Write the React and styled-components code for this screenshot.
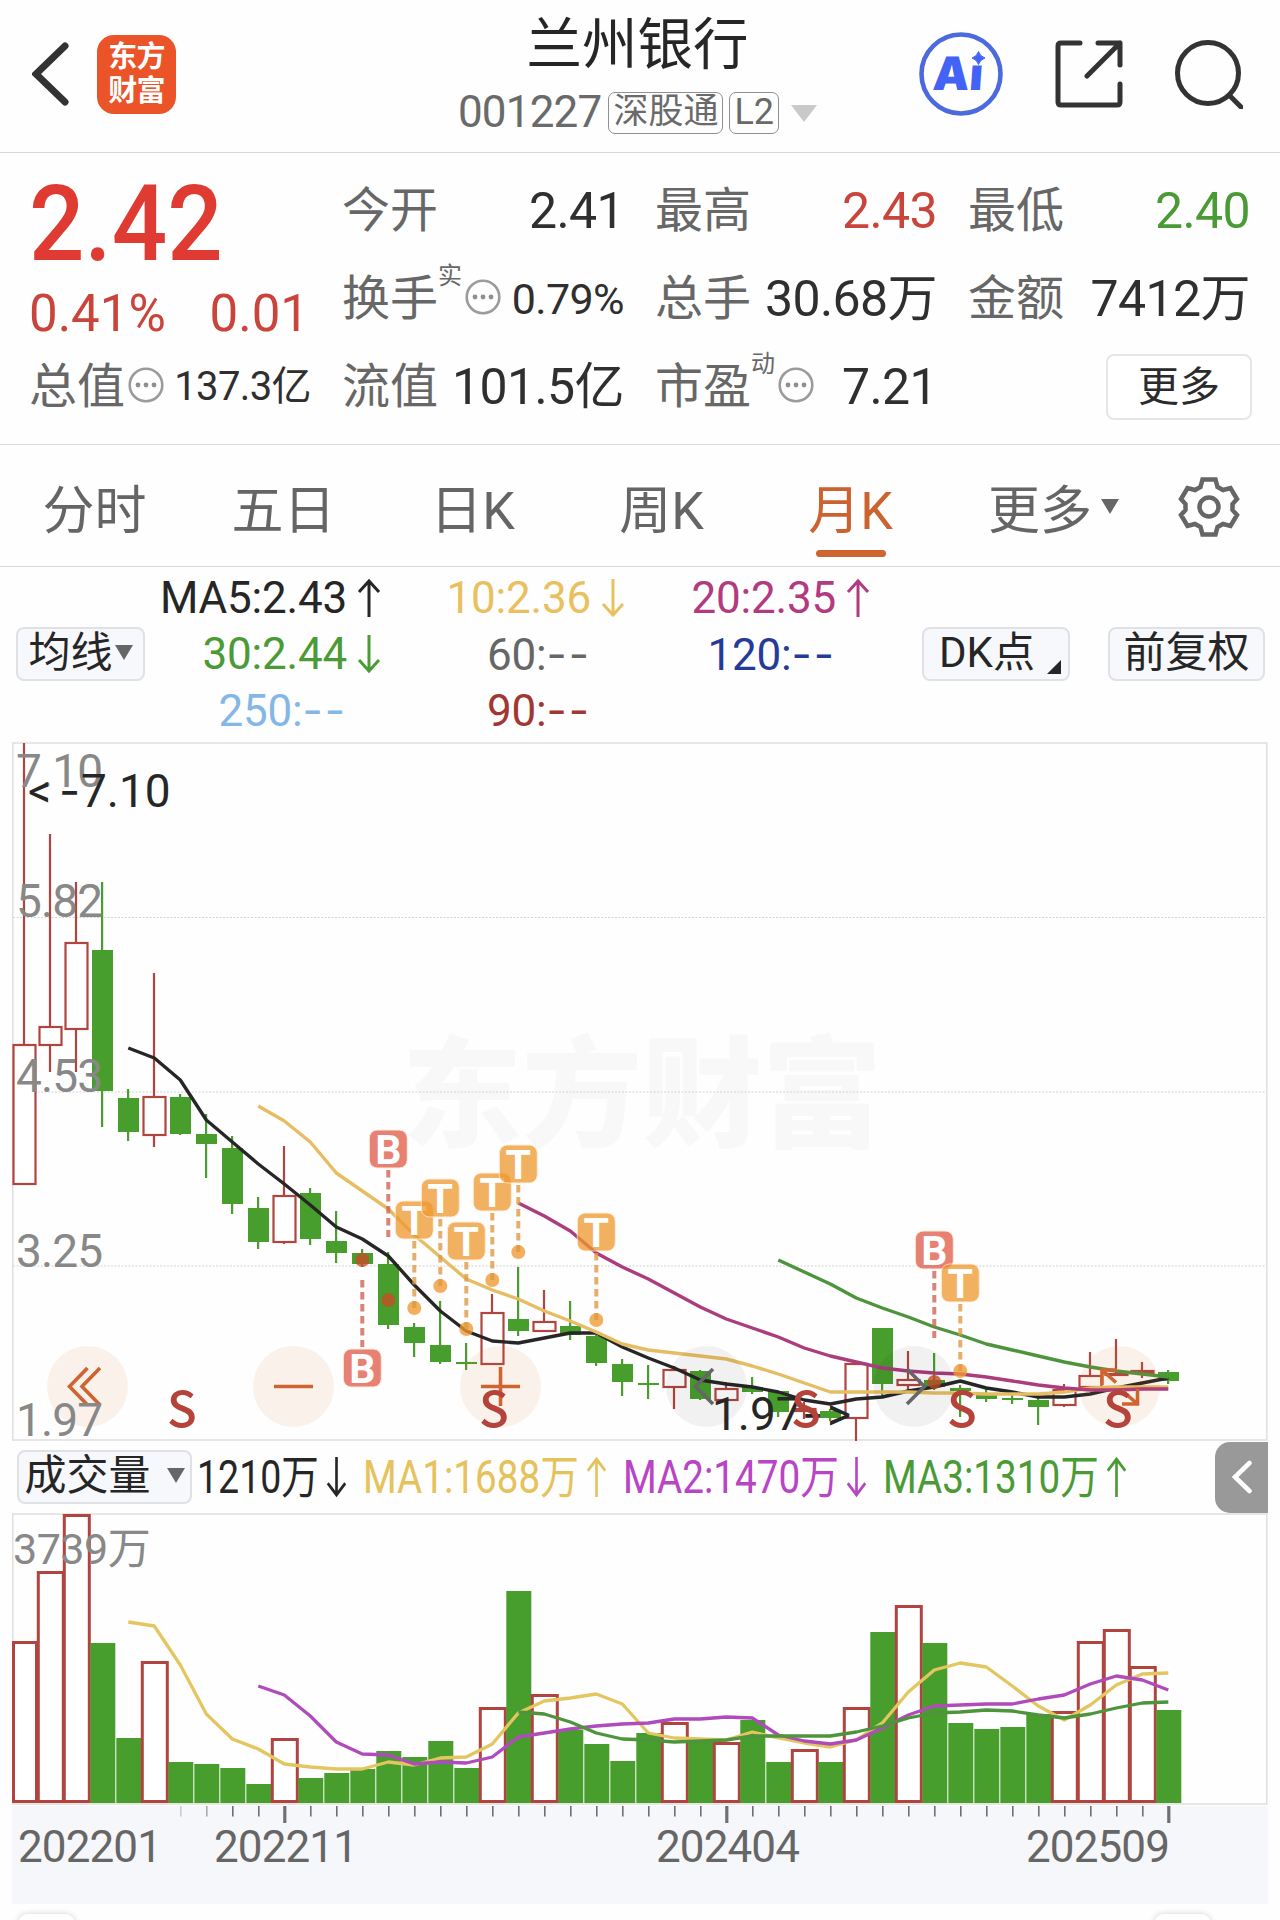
import React from "react";
import styled, { createGlobalStyle } from "styled-components";

const GlobalStyle = createGlobalStyle`
  * {
    box-sizing: border-box;
  }

  body {
    margin: 0;
    background: #ffffff;
    font-family: Roboto, "Noto Sans CJK SC", sans-serif;
  }
`;

const RED = "#c9453b";
const GREEN = "#4a9a36";
const CANDLE_RED = "#b0453f";
const CANDLE_GREEN = "#489e2d";
const ORANGE = "#cf6430";

const Page = styled.div`
  width: 1280px;
  height: 1920px;
  overflow: hidden;
  display: flex;
  flex-flow: column;
  background: #fefefe;
  color: #2b2b2b;

  > * {
    flex: none;
  }
`;

/* header */

const Header = styled.header`
  height: 153px;
  padding: 0 37px 4px 32px;
  border-bottom: 1px solid #d8d8d8;
  display: grid;
  grid-template-columns: 1fr auto 1fr;
  align-items: center;
`;

const HeaderLeft = styled.div`
  display: flex;
  align-items: center;
  gap: 28px;
`;

const AppLogo = styled.div`
  width: 79px;
  height: 79px;
  border-radius: 17px;
  background: #ea5428;
  color: #ffffff;
  display: flex;
  flex-flow: column;
  align-items: center;
  justify-content: center;
  font-size: 29px;
  font-weight: 700;
  line-height: 34px;
  letter-spacing: -0.8px;
`;

const HeaderCenter = styled.div`
  display: flex;
  flex-flow: column;
  align-items: center;
  gap: 14px;
`;

const StockName = styled.h1`
  margin: 0;
  font-size: 55.5px;
  font-weight: 400;
  line-height: 64px;
  color: #262626;
`;

const StockMeta = styled.div`
  display: flex;
  align-items: center;
  height: 42px;
  color: #6a6a6a;
`;

const StockCode = styled.span`
  font-size: 44px;
  line-height: 40px;
  letter-spacing: -0.8px;
  margin: -3px 7px 0 0;
`;

const MetaTag = styled.span`
  height: 42px;
  padding: 0 4px;
  margin-right: 6px;
  border: 1.5px solid #909090;
  border-radius: 7px;
  font-size: ${(props) => props.$size || 35}px;
  line-height: 38px;
`;

const Triangle = styled.span`
  border: solid transparent;
  border-width: ${(props) => props.$h}px ${(props) => props.$w / 2}px 0;
  border-top-color: ${(props) => props.$color || "#666666"};
  margin-left: ${(props) => props.$gap || 0}px;
`;

const HeaderRight = styled.div`
  display: flex;
  align-items: center;
  justify-content: flex-end;
  gap: 52px;
`;

/* quote */

const Quote = styled.section`
  height: 292px;
  padding: 14px 29px 0;
  border-bottom: 1px solid #d8d8d8;
  display: grid;
  grid-template-columns: repeat(4, 282px);
  grid-template-rows: repeat(3, 88px);
  column-gap: 31px;
`;

const PriceBlock = styled.div`
  grid-row: span 2;
`;

const Price = styled.div`
  font-size: 105px;
  font-weight: 500;
  line-height: 115px;
  color: #df3b32;
  transform: scaleX(0.93);
  transform-origin: left center;
`;

const Change = styled.div`
  display: flex;
  justify-content: space-between;
  padding-right: 2px;
  font-size: 51px;
  line-height: 63px;
  color: ${RED};
`;

const Cell = styled.div`
  display: flex;
  align-items: center;
`;

const CellLabel = styled.span`
  font-size: 48px;
  line-height: 60px;
  color: #676767;
`;

const CellSup = styled.sup`
  align-self: flex-start;
  margin-top: 9px;
  font-size: 24px;
  line-height: 24px;
  color: #676767;
`;

const CellValue = styled.span`
  margin-left: auto;
  font-size: ${(props) => props.$size || 50}px;
  line-height: 60px;
  letter-spacing: -0.6px;
  white-space: nowrap;
  color: ${(props) => props.$color || "#2f2f2f"};
`;

const MoreButton = styled.button`
  width: 146px;
  height: 66px;
  margin: 0 -2px 0 auto;
  padding: 0;
  border: 2px solid #e6e6e6;
  border-radius: 8px;
  background: #ffffff;
  font-family: inherit;
  font-size: 41px;
  line-height: 58px;
  color: #2b2b2b;
`;

/* period tabs */

const Tabs = styled.nav`
  height: 122px;
  border-bottom: 1px solid #d8d8d8;
  display: grid;
  grid-template-columns: repeat(5, 189px) 217px 93px;
`;

const Tab = styled.div`
  display: flex;
  align-items: center;
  justify-content: center;
  padding-top: 2px;
  font-size: 52px;
  color: ${(props) => (props.$active ? "#cb622f" : "#656565")};
  position: relative;

  &::after {
    content: "";
    display: ${(props) => (props.$active ? "block" : "none")};
    position: absolute;
    bottom: 9px;
    width: 70px;
    height: 7px;
    border-radius: 4px;
    background: ${ORANGE};
  }
`;

/* moving average legend */

const Averages = styled.section`
  height: 175px;
  padding: 3px 0 4px 16px;
  display: flex;
  align-items: center;
`;

const Pill = styled.button`
  width: ${(props) => props.$width}px;
  height: 54px;
  flex: none;
  padding: 0 0 3px;
  border: 2px solid #dfe1e5;
  border-radius: 8px;
  background: #f7f8fb;
  display: flex;
  align-items: center;
  justify-content: center;
  font-family: inherit;
  font-size: 42px;
  line-height: 48px;
  color: #262626;
`;

const Corner = styled.span`
  align-self: flex-end;
  margin: 0 -8px 2px 12px;
  border-style: solid;
  border-width: 0 0 14px 14px;
  border-color: transparent transparent #262626;
`;

const Legend = styled.div`
  display: grid;
  grid-template-columns: 236px 244px 245px;
  grid-auto-rows: 56px;
`;

const LegendItem = styled.div`
  display: flex;
  align-items: center;
  justify-content: flex-end;
  gap: 10px;
  font-size: 44px;
  letter-spacing: -0.2px;
  color: ${(props) => props.$color};
`;

const Dashes = styled.span`
  font-family: Inter, sans-serif;
  letter-spacing: 2px;
`;

const ArrowSlot = styled.span`
  width: 24px;
  height: 40px;
  display: flex;
`;

const PillGroup = styled.div`
  display: flex;
  gap: 38px;
  margin-left: 52px;
`;

/* charts */

const Chart = styled.svg`
  display: block;
  margin-left: 12px;
`;

const AxisText = styled.text`
  font-size: ${(props) => props.$size || 46}px;
  letter-spacing: ${(props) => props.$spacing ?? -0.9}px;
  fill: ${(props) => props.$fill || "#888888"};
`;

const SignalText = styled.text`
  font-size: 41px;
  font-weight: 700;
  text-anchor: middle;
  fill: #ffffff;
`;

const SellText = styled.text`
  font-family: "Noto Sans CJK SC", sans-serif;
  font-size: 49px;
  font-weight: 500;
  text-anchor: middle;
  fill: #b5433a;
`;

const Watermark = styled.text`
  font-family: "Noto Sans CJK SC", sans-serif;
  font-size: 120px;
  font-weight: 900;
  text-anchor: middle;
  fill: #f8f8f8;
`;

const VolumeBar = styled.section`
  height: 72px;
  padding-left: 17px;
  display: flex;
  align-items: center;
`;

const VolumeItem = styled.div`
  display: flex;
  align-items: center;
  gap: 10px;
  margin-left: ${(props) => props.$gap}px;
  color: ${(props) => props.$color};
`;

const NarrowText = styled.span`
  width: ${(props) => props.$width}px;
  font-size: 46px;
  line-height: 60px;
  white-space: nowrap;
  transform: scaleX(${(props) => props.$scale || 0.84});
  transform-origin: left center;
`;

const CollapseHandle = styled.div`
  width: 53px;
  height: 71px;
  margin: 0 12px 0 auto;
  border-radius: 15px 0 0 15px;
  background: #999999;
  display: flex;
  align-items: center;
  justify-content: center;
`;

const Footer = styled.footer`
  height: 16px;
  margin-top: 10px;
  padding: 0 69px 0 18px;
  display: flex;
  justify-content: space-between;
`;

const FooterTab = styled.div`
  width: 57px;
  height: 40px;
  border-radius: 10px;
  background: #ffffff;
  box-shadow: 0 0 6px rgba(0, 0, 0, 0.18);
`;

// [up, high, bodyTop, bodyBottom, low], one entry per month
const candles = [
  [1, 743, 1045, 1184, 1184],
  [1, 834, 1027, 1045, 1072],
  [1, 882, 943, 1029, 1072],
  [0, 882, 950, 1091, 1127],
  [0, 1089, 1098, 1132, 1141],
  [1, 973, 1097, 1135, 1147],
  [0, 1094, 1097, 1134, 1135],
  [0, 1114, 1134, 1144, 1178],
  [0, 1136, 1148, 1204, 1214],
  [0, 1197, 1208, 1242, 1249],
  [1, 1146, 1196, 1242, 1244],
  [0, 1188, 1193, 1239, 1245],
  [0, 1211, 1241, 1253, 1263],
  [0, 1249, 1253, 1264, 1267],
  [0, 1252, 1264, 1325, 1329],
  [0, 1323, 1327, 1343, 1357],
  [0, 1301, 1345, 1362, 1364],
  [0, 1343, 1362, 1364, 1370],
  [1, 1294, 1313, 1364, 1364],
  [0, 1267, 1319, 1331, 1336],
  [1, 1290, 1322, 1331, 1331],
  [0, 1301, 1326, 1335, 1340],
  [0, 1335, 1336, 1363, 1366],
  [0, 1359, 1364, 1382, 1396],
  [0, 1365, 1383, 1385, 1399],
  [1, 1366, 1370, 1387, 1409],
  [0, 1370, 1371, 1399, 1400],
  [1, 1382, 1389, 1400, 1400],
  [0, 1377, 1387, 1392, 1394],
  [0, 1391, 1391, 1412, 1417],
  [1, 1402, 1409, 1411, 1419],
  [0, 1409, 1411, 1418, 1421],
  [1, 1363, 1364, 1418, 1441],
  [0, 1328, 1328, 1384, 1397],
  [1, 1351, 1380, 1385, 1390],
  [0, 1353, 1380, 1387, 1390],
  [0, 1385, 1388, 1391, 1417],
  [0, 1389, 1395, 1399, 1402],
  [0, 1395, 1398, 1400, 1404],
  [0, 1393, 1400, 1407, 1425],
  [1, 1384, 1390, 1405, 1407],
  [1, 1352, 1376, 1387, 1387],
  [1, 1339, 1374, 1375, 1376],
  [1, 1362, 1371, 1373, 1378],
  [0, 1370, 1372, 1381, 1384],
];

// [up, top]
const volumes = [
  [1, 1641], [1, 1571], [1, 1514], [0, 1643], [0, 1738], [1, 1661],
  [0, 1762], [0, 1764], [0, 1768], [0, 1784], [1, 1738], [0, 1778],
  [0, 1773], [0, 1769], [0, 1751], [0, 1757], [0, 1741], [0, 1768],
  [1, 1707], [0, 1591], [1, 1694], [0, 1730], [0, 1744], [0, 1761],
  [0, 1733], [1, 1722], [0, 1740], [1, 1742], [0, 1720], [0, 1762],
  [1, 1749], [0, 1762], [1, 1707], [0, 1632], [1, 1605], [0, 1643],
  [0, 1723], [0, 1729], [0, 1727], [0, 1714], [1, 1711], [1, 1641],
  [1, 1629], [1, 1666], [0, 1710],
];

const priceLines = [
  {
    color: "#262626",
    start: 4,
    ys: [1048, 1058, 1080, 1120, 1142, 1164, 1184, 1205, 1227, 1239, 1256, 1285, 1311, 1331, 1341, 1343, 1338, 1333, 1333, 1347, 1358, 1368, 1380, 1384, 1387, 1392, 1400, 1404, 1399, 1397, 1391, 1387, 1381, 1388, 1392, 1397, 1397, 1394, 1388, 1383, 1378],
  },
  {
    color: "#e6bd63",
    start: 9,
    ys: [1106, 1121, 1142, 1173, 1191, 1209, 1235, 1257, 1279, 1290, 1299, 1311, 1321, 1332, 1344, 1350, 1353, 1356, 1359, 1366, 1374, 1383, 1392, 1392, 1392, 1392, 1393, 1393, 1394, 1394, 1394, 1392, 1388, 1387, 1387, 1387],
  },
  {
    color: "#ab3c7d",
    start: 19,
    ys: [1203, 1216, 1231, 1253, 1267, 1279, 1293, 1307, 1319, 1328, 1337, 1348, 1356, 1362, 1368, 1371, 1373, 1374, 1377, 1381, 1385, 1388, 1390, 1390, 1389, 1389],
  },
  {
    color: "#4d943c",
    start: 29,
    ys: [1260, 1272, 1284, 1298, 1308, 1317, 1327, 1335, 1344, 1350, 1356, 1362, 1367, 1371, 1374, 1377],
  },
];

const volumeLines = [
  {
    color: "#e3c65f",
    start: 4,
    ys: [1622, 1626, 1665, 1714, 1739, 1749, 1764, 1767, 1769, 1769, 1762, 1765, 1758, 1757, 1744, 1713, 1701, 1698, 1694, 1704, 1733, 1738, 1739, 1740, 1732, 1738, 1743, 1747, 1740, 1723, 1692, 1670, 1663, 1667, 1686, 1706, 1720, 1705, 1685, 1674, 1673],
  },
  {
    color: "#b04bbb",
    start: 9,
    ys: [1686, 1695, 1716, 1742, 1754, 1755, 1764, 1762, 1763, 1757, 1737, 1733, 1729, 1726, 1724, 1723, 1719, 1719, 1717, 1718, 1735, 1741, 1744, 1740, 1728, 1715, 1706, 1705, 1704, 1704, 1699, 1695, 1684, 1676, 1680, 1690],
  },
  {
    color: "#4d943c",
    start: 19,
    ys: [1712, 1714, 1722, 1733, 1739, 1740, 1742, 1741, 1740, 1736, 1736, 1736, 1736, 1732, 1726, 1718, 1713, 1712, 1710, 1711, 1715, 1718, 1714, 1708, 1703, 1702],
  },
];

// badge: centre of the box, from/to: dashed stem, dot: price it points at
const signals = [
  { type: "B", i: 14, badge: 1149, from: 1170, to: 1237, dot: 1300 },
  { type: "B", i: 13, badge: 1368, from: 1280, to: 1347, dot: 1260 },
  { type: "T", i: 15, badge: 1220, from: 1241, to: 1308, dot: 1308 },
  { type: "T", i: 16, badge: 1198, from: 1219, to: 1286, dot: 1286 },
  { type: "T", i: 17, badge: 1241, from: 1262, to: 1329, dot: 1329 },
  { type: "T", i: 18, badge: 1192, from: 1213, to: 1280, dot: 1280 },
  { type: "T", i: 19, badge: 1164, from: 1185, to: 1252, dot: 1252 },
  { type: "T", i: 22, badge: 1232, from: 1253, to: 1320, dot: 1320 },
  { type: "B", i: 35, badge: 1250, from: 1271, to: 1338, dot: 1382 },
  { type: "T", i: 36, badge: 1283, from: 1304, to: 1371, dot: 1371 },
];

const legend = [
  { text: "MA5:2.43", dir: "up", color: "#262626" },
  { text: "10:2.36", dir: "down", color: "#eac05f" },
  { text: "20:2.35", dir: "up", color: "#b23a80" },
  { text: "30:2.44", dir: "down", color: GREEN },
  { text: "60:", empty: true, color: "#666666" },
  { text: "120:", empty: true, color: "#263a98" },
  { text: "250:", empty: true, color: "#84b7e6" },
  { text: "90:", empty: true, color: "#a03732" },
];

const centerX = (i) => 24.3 + 26 * i;

const toPoints = ({ start, ys }) =>
  ys.map((y, n) => `${centerX(start + n)},${y}`).join(" ");

const Arrow = ({ dir, width = 24, height = 40 }) => (
  <svg width={width} height={height} viewBox="0 0 24 40" preserveAspectRatio="none">
    <path
      d={dir === "up" ? "M12 39V3M2 14L12 3L22 14" : "M12 1V37M2 26L12 37L22 26"}
      fill="none"
      stroke="currentColor"
      strokeWidth="3"
    />
  </svg>
);

const DotsIcon = styled.svg`
  flex: none;
  margin: 0 0 4px 3px;
`;

const MoreDots = () => (
  <DotsIcon width="36" height="36" viewBox="0 0 36 36">
    <circle cx="18" cy="18" r="16.3" fill="none" stroke="#9b9b9b" strokeWidth="2.6" />
    <circle cx="10" cy="18" r="2.4" fill="#8e8e8e" />
    <circle cx="18" cy="18" r="2.4" fill="#8e8e8e" />
    <circle cx="26" cy="18" r="2.4" fill="#8e8e8e" />
  </DotsIcon>
);

const QuoteCell = ({ label, sup, info, value, size, color }) => (
  <Cell>
    <CellLabel>{label}</CellLabel>
    {sup && <CellSup>{sup}</CellSup>}
    {info && <MoreDots />}
    <CellValue $size={size} $color={color}>
      {value}
    </CellValue>
  </Cell>
);

const Signal = ({ type, i, badge, from, to, dot }) => {
  const x = centerX(i);
  const buy = type === "B";
  const color = buy ? "#e15a48" : "#ef9930";
  return (
    <g>
      <circle cx={x} cy={dot} r="7" fill={buy ? "#c94a28" : color} opacity="0.78" />
      <line x1={x} x2={x} y1={from} y2={to} stroke={buy ? "#cf6154" : "#dd9a44"} strokeWidth="4" strokeDasharray="7.5 4.5" opacity="0.78" />
      <rect x={x - 19} y={badge - 19} width="38" height="38" rx="8" fill={color} stroke="#ffe9cf" strokeWidth="1" opacity="0.76" />
      <SignalText x={x} y={badge + 14.5}>{type}</SignalText>
    </g>
  );
};

const ChartButtons = () => (
  <g fill="none" strokeWidth="3.6">
    {[87.5, 293.5, 500.5, 1119.5].map((x) => (
      <circle key={x} cx={x} cy="1386.5" r="40.5" fill="#d96a30" fillOpacity="0.09" />
    ))}
    {[706.5, 914].map((x) => (
      <circle key={x} cx={x} cy="1386.5" r="40.5" fill="#000000" fillOpacity="0.05" />
    ))}
    <g stroke={ORANGE}>
      <path d="M87.500 1368L69.500 1386.500L87.500 1405M100 1368L82 1386.500L100 1405" />
      <path d="M274 1386.500H313" />
      <path d="M481 1386.500H520M500.500 1367V1406" />
      <path d="M1117 1370H1102V1385M1102 1370L1116 1382.500M1122 1404H1137.500V1389M1137.500 1404L1122 1390.500" />
    </g>
    <path d="M713 1369L695.500 1386.500L713 1404M907 1369L924.500 1386.500L907 1404" stroke="#666666" />
  </g>
);

const PriceChart = () => (
  <Chart width="1256" height="699" viewBox="12 742 1256 699">
    <Watermark x="642" y="1138">东方财富</Watermark>
    {[917.5, 1092, 1266].map((y) => (
      <line key={y} x1="13" x2="1267" y1={y} y2={y} stroke="#d2d2d2" strokeWidth="1" strokeDasharray="2 1.5" />
    ))}
    <rect x="12.75" y="743" width="1254" height="697" fill="none" stroke="#e0e0e0" strokeWidth="1.6" />
    {candles.map(([up, high, top, bottom, low], i) => {
      const x = centerX(i);
      return up ? (
        <g key={i} stroke={CANDLE_RED} strokeWidth="2.2" fill="none">
          <path d={`M${x - 0.3} ${high}V${top}M${x - 0.3} ${bottom}V${low}`} />
          <rect x={x - 10.8} y={top} width="22" height={bottom - top} fill="#ffffff" />
        </g>
      ) : (
        <g key={i} fill={CANDLE_GREEN}>
          <rect x={x - 1.3} y={high} width="2.2" height={low - high} />
          <rect x={x - 10.3} y={top} width="21" height={bottom - top} />
        </g>
      );
    })}
    {priceLines.map((line) => (
      <polyline key={line.color} points={toPoints(line)} fill="none" stroke={line.color} strokeWidth="3.4" strokeLinejoin="round" />
    ))}
    {signals.map((signal) => (
      <Signal key={signal.i} {...signal} />
    ))}
    <ChartButtons />
    <AxisText x="16" y="787">7.10</AxisText>
    <AxisText x="16" y="917">5.82</AxisText>
    <AxisText x="16" y="1092">4.53</AxisText>
    <AxisText x="16" y="1267">3.25</AxisText>
    <AxisText x="16" y="1436">1.97</AxisText>
    <AxisText x="28" y="807" $fill="#262626" $spacing={0}>
      {"<"}
      <tspan x="59" fontFamily="Inter">-</tspan>
      <tspan x="81">7.10</tspan>
    </AxisText>
    <AxisText x="712" y="1430" $fill="#262626" $spacing={0}>
      1.97
      <tspan x="802" fontFamily="Inter">-</tspan>
      <tspan x="827">{">"}</tspan>
    </AxisText>
    {[182, 494, 806, 962, 1118].map((x) => (
      <SellText key={x} x={x} y="1427">S</SellText>
    ))}
  </Chart>
);

const VolumeChart = () => (
  <Chart width="1256" height="391" viewBox="12 1513 1256 391">
    <rect x="12" y="1806" width="1256" height="98" fill="#f6f7fa" />
    <rect x="12.75" y="1514" width="1254" height="290" fill="none" stroke="#e0e0e0" strokeWidth="1.6" />
    {volumes.map(([up, top], i) =>
      up ? (
        <rect key={i} x={Math.max(centerX(i) - 12, 13.5)} y={top + 1.5} width={i === 0 ? 23 : 25} height={1801.5 - top - 1.5} fill="#ffffff" stroke={CANDLE_RED} strokeWidth="3" />
      ) : (
        <rect key={i} x={centerX(i) - 12} y={top} width="25" height={1803 - top} fill={CANDLE_GREEN} />
      )
    )}
    {volumeLines.map((line) => (
      <polyline key={line.color} points={toPoints(line)} fill="none" stroke={line.color} strokeWidth="3.3" strokeLinejoin="round" />
    ))}
    {volumes.map((_, i) => {
      if (i < 6) return null;
      const major = [10, 27, 44].includes(i);
      return (
        <line
          key={i}
          x1={centerX(i) + 0.5}
          x2={centerX(i) + 0.5}
          y1="1806"
          y2={major ? 1823 : 1816.5}
          stroke={i === 6 ? "#cccccc" : i === 7 ? "#aaaaaa" : "#707070"}
          strokeWidth={major ? 3.2 : 1.6}
        />
      );
    })}
    <AxisText x="13" y="1564" $size="43" $spacing={-0.5}>3739万</AxisText>
    <AxisText x="18" y="1861.5" $size="44" $fill="#666666">202201</AxisText>
    <AxisText x="214" y="1861.5" $size="44" $fill="#666666">202211</AxisText>
    <AxisText x="656" y="1861.5" $size="44" $fill="#666666">202404</AxisText>
    <AxisText x="1026" y="1861.5" $size="44" $fill="#666666">202509</AxisText>
  </Chart>
);

export default function App() {
  return (
    <Page>
      <GlobalStyle />
      <Header>
        <HeaderLeft>
          <svg width="37" height="64" viewBox="0 0 37 64">
            <path d="M33 4L4 32L33 60" fill="none" stroke="#333333" strokeWidth="7" strokeLinecap="round" />
          </svg>
          <AppLogo>
            <span>东方</span>
            <span>财富</span>
          </AppLogo>
        </HeaderLeft>
        <HeaderCenter>
          <StockName>兰州银行</StockName>
          <StockMeta>
            <StockCode>001227</StockCode>
            <MetaTag>深股通</MetaTag>
            <MetaTag $size={36}>L2</MetaTag>
            <Triangle $w={26} $h={17} $gap={6} $color="#c9c9c9" />
          </StockMeta>
        </HeaderCenter>
        <HeaderRight>
          <svg width="84" height="84" viewBox="0 0 84 84">
            <circle cx="42" cy="42" r="39.5" fill="none" stroke="#4c69dd" strokeWidth="4.6" />
            <text x="13" y="58" fontFamily="Inter" fontSize="46" fontWeight="900" fill="#4263f5" transform="skewX(-4) translate(4 0)">
              Ai
            </text>
            <rect x="50" y="19" width="19" height="14.5" fill="#fefefe" />
            <path d="M59.500 19.500Q61 24.500 66 26Q61 27.500 59.500 32.500Q58 27.500 53 26Q58 24.500 59.500 19.500Z" fill="#4263f5" stroke="#4263f5" />
          </svg>
          <svg width="68" height="68" viewBox="0 0 68 68" fill="none" stroke="#333333" strokeWidth="5" strokeLinecap="round" strokeLinejoin="round">
            <path d="M25 3H6Q3 3 3 6V62Q3 65 6 65H62Q65 65 65 62V44" />
            <path d="M43 3H65V25M65 3L32 36" />
          </svg>
          <svg width="68" height="70" viewBox="0 0 68 70" fill="none" stroke="#333333" strokeWidth="5" strokeLinecap="round">
            <circle cx="33" cy="34" r="30.5" />
            <path d="M54 56L66 68" />
          </svg>
        </HeaderRight>
      </Header>

      <Quote>
        <PriceBlock>
          <Price>2.42</Price>
          <Change>
            <span>0.41%</span>
            <span>0.01</span>
          </Change>
        </PriceBlock>
        <QuoteCell label="今开" value="2.41" />
        <QuoteCell label="最高" value="2.43" color={RED} />
        <QuoteCell label="最低" value="2.40" color={GREEN} />
        <QuoteCell label="换手" sup="实" info size={43} value="0.79%" />
        <QuoteCell label="总手" value="30.68万" />
        <QuoteCell label="金额" value="7412万" />
        <QuoteCell label="总值" info size={40} value="137.3亿" />
        <QuoteCell label="流值" value="101.5亿" />
        <QuoteCell label="市盈" sup="动" info value="7.21" />
        <Cell>
          <MoreButton>更多</MoreButton>
        </Cell>
      </Quote>

      <Tabs>
        <Tab>分时</Tab>
        <Tab>五日</Tab>
        <Tab>日K</Tab>
        <Tab>周K</Tab>
        <Tab $active>月K</Tab>
        <Tab>
          更多
          <Triangle $w={18} $h={15} $gap={9} />
        </Tab>
        <Tab>
          <svg width="62" height="62" viewBox="0 0 62 62" fill="none" stroke="#666666" strokeWidth="4.5">
            <path d="M24.500 3.500H37.500L39.500 11L45 14L52.500 12L59 23L54.500 28V34L59 39L52.500 50L45 48L39.500 51L37.500 58.500H24.500L22.500 51L17 48L9.500 50L3 39L7.500 34V28L3 23L9.500 12L17 14L22.500 11Z" />
            <circle cx="31" cy="31" r="9.5" />
          </svg>
        </Tab>
      </Tabs>

      <Averages>
        <Pill $width={129}>
          均线
          <Triangle $w={18} $h={15} $gap={2} />
        </Pill>
        <Legend>
          {legend.map((item) => (
            <LegendItem key={item.text} $color={item.color}>
              <span>
                {item.text}
                {item.empty && <Dashes>--</Dashes>}
              </span>
              <ArrowSlot>{item.dir && <Arrow dir={item.dir} />}</ArrowSlot>
            </LegendItem>
          ))}
        </Legend>
        <PillGroup>
          <Pill $width={148}>
            DK点
            <Corner />
          </Pill>
          <Pill $width={157}>前复权</Pill>
        </PillGroup>
      </Averages>

      <PriceChart />

      <VolumeBar>
        <Pill $width={175}>
          成交量
          <Triangle $w={18} $h={15} $gap={16} />
        </Pill>
        <VolumeItem $gap={5} $color="#262626">
          <NarrowText $width={119} $scale={0.815}>1210万</NarrowText>
          <Arrow dir="down" width={21} height={42} />
        </VolumeItem>
        <VolumeItem $gap={16} $color="#e6c25c">
          <NarrowText $width={213}>MA1:1688万</NarrowText>
          <Arrow dir="up" width={21} height={42} />
        </VolumeItem>
        <VolumeItem $gap={16} $color="#b845c4">
          <NarrowText $width={213}>MA2:1470万</NarrowText>
          <Arrow dir="down" width={21} height={42} />
        </VolumeItem>
        <VolumeItem $gap={16} $color={GREEN}>
          <NarrowText $width={213}>MA3:1310万</NarrowText>
          <Arrow dir="up" width={21} height={42} />
        </VolumeItem>
        <CollapseHandle>
          <svg width="22" height="34" viewBox="0 0 22 34">
            <path d="M18.500 3L4 17L18.500 31" fill="none" stroke="#ffffff" strokeWidth="4.6" strokeLinecap="round" />
          </svg>
        </CollapseHandle>
      </VolumeBar>

      <VolumeChart />

      <Footer>
        <FooterTab />
        <FooterTab />
      </Footer>
    </Page>
  );
}
